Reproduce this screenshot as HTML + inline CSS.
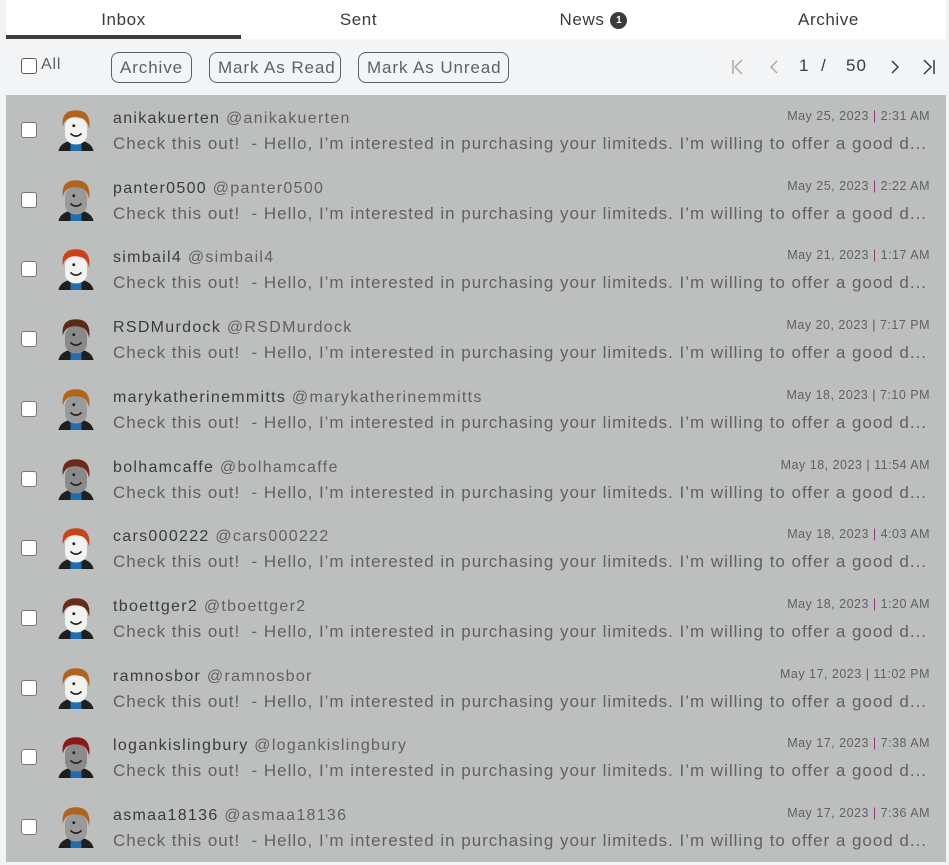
<!DOCTYPE html>
<html><head><meta charset="utf-8"><style>
*{box-sizing:border-box;margin:0;padding:0}
body{width:949px;height:865px;background:#f2f4f5;font-family:"Liberation Sans",sans-serif;position:relative;overflow:hidden}
.tabs{position:absolute;left:6px;top:0;width:940px;height:39px;background:#fff;display:flex}
.tab{flex:1;text-align:center;font-size:17px;letter-spacing:0.6px;color:#393b3d;padding-top:10px;position:relative}
.tab.act:after{content:"";position:absolute;left:0;right:0;bottom:0;height:4px;background:#393b3d}
.badge{display:inline-block;width:17px;height:17px;border-radius:50%;background:#393b3d;color:#fff;font-size:10px;font-weight:bold;line-height:17px;vertical-align:2px;margin-left:6px;letter-spacing:0}
.bar{position:absolute;left:6px;top:39px;width:940px;height:56px;background:#f2f4f5}
.cb{position:absolute;width:16px;height:16px;border:1px solid #5a5c5e;border-radius:3px;background:#fff}
.btn{position:absolute;top:13px;height:31px;border:1px solid #5e6063;border-radius:8px;font-size:17px;letter-spacing:0.9px;color:#5e6063;padding:5px 8px 0;white-space:nowrap}
.pg{position:absolute;top:17px;font-size:17px;color:#393b3d}
.list{position:absolute;left:6px;top:95px;width:940px;height:767px;background:#bdbebe}
.row{position:absolute;left:0;width:940px;height:70px}
.row .cb{left:15px;top:27px;border-color:#777;border-radius:3px}
.av{position:absolute;left:48px;top:12px}
.nm{position:absolute;left:107px;top:15px;font-size:16px;letter-spacing:1.3px;color:#393b3d;white-space:nowrap}
.nm span{color:#606162}
.pv{position:absolute;left:107px;top:39px;font-size:17px;letter-spacing:0.98px;color:#606162;white-space:nowrap}
.dt{position:absolute;right:16px;top:14px;font-size:12.5px;letter-spacing:0.5px;color:#606162;white-space:nowrap}
.dt i{font-style:normal;color:#8a3a7a}
</style></head><body>
<div class="tabs">
<div class="tab act">Inbox</div><div class="tab">Sent</div><div class="tab">News<span class="badge">1</span></div><div class="tab">Archive</div>
</div>
<div class="bar">
<div class="cb" style="left:15px;top:19px"></div>
<div style="position:absolute;left:35px;top:17px;font-size:16px;letter-spacing:0.8px;color:#5e6063">All</div>
<div class="btn" style="left:105px;width:81px">Archive</div>
<div class="btn" style="left:203px;width:132px">Mark As Read</div>
<div class="btn" style="left:352px;width:151px">Mark As Unread</div>
<svg style="position:absolute;left:724px;top:19px" width="16" height="18" viewBox="0 0 16 18" fill="none" stroke="#aaa" stroke-width="1.5"><path d="M3 2V16M12 2L5 9L12 16"/></svg>
<svg style="position:absolute;left:762px;top:19px" width="12" height="18" viewBox="0 0 12 18" fill="none" stroke="#aaa" stroke-width="1.5"><path d="M9 3L3 9L9 15"/></svg>
<div class="pg" style="left:793px">1</div>
<div class="pg" style="left:815px">/</div>
<div class="pg" style="left:840px;letter-spacing:1px">50</div>
<svg style="position:absolute;left:883px;top:19px" width="12" height="18" viewBox="0 0 12 18" fill="none" stroke="#393b3d" stroke-width="1.5"><path d="M3 3L9 9L3 15"/></svg>
<svg style="position:absolute;left:915px;top:19px" width="16" height="18" viewBox="0 0 16 18" fill="none" stroke="#393b3d" stroke-width="1.5"><path d="M3 2L10 9L3 16M13 2V16"/></svg>
</div>
<div class="list"></div>
<script>
var d=[["anikakuerten","May 25, 2023","2:31 AM","#f2f2f0","#b0641e"],["panter0500","May 25, 2023","2:22 AM","#9a9a9a","#b0641e"],["simbail4","May 21, 2023","1:17 AM","#f2f2f0","#c9421a"],["RSDMurdock","May 20, 2023","7:17 PM","#8a8a8a","#5a2a1a"],["marykatherinemmitts","May 18, 2023","7:10 PM","#9a9a9a","#b0641e"],["bolhamcaffe","May 18, 2023","11:54 AM","#8a8a8a","#6a2a1a"],["cars000222","May 18, 2023","4:03 AM","#f2f2f0","#c9421a"],["tboettger2","May 18, 2023","1:20 AM","#f2f2f0","#6a2a1a"],["ramnosbor","May 17, 2023","11:02 PM","#f2f2f0","#b0641e"],["logankislingbury","May 17, 2023","7:38 AM","#8a8a8a","#8a1a1a"],["asmaa18136","May 17, 2023","7:36 AM","#9a9a9a","#b0641e"]];
var h="";
d.forEach(function(r,i){
var t=(i*69.7).toFixed(1);
h+='<div class="row" style="top:'+t+'px"><div class="cb"></div>'+
'<svg class="av" width="44" height="44" viewBox="0 0 40 40"><path d="M4 40 Q6 31 20 30 Q34 31 36 40 Z" fill="#1f1f1f"/><rect x="15" y="33" width="10" height="7" fill="#1f6fb0"/><rect x="10" y="9" width="20" height="25" rx="9" fill="'+r[3]+'"/><path d="M15 24 Q20 29 25 24" stroke="#222" stroke-width="1.5" fill="none"/><circle cx="18" cy="17" r="1.3" fill="#222"/><path d="M8 18 Q6 3 20 3 Q34 3 32 20 Q30 11 24 10 Q16 8 11 12 Q9 14 8 18Z" fill="'+r[4]+'"/></svg>'+
'<div class="nm">'+r[0]+' <span>@'+r[0]+'</span></div>'+
'<div class="dt">'+r[1]+' <i>|</i> '+r[2]+'</div>'+
'<div class="pv">Check this out!&nbsp; - Hello, I\u2019m interested in purchasing your limiteds. I\u2019m willing to offer a good d...</div></div>';
});
document.querySelector('.list').insertAdjacentHTML('beforeend',h);
</script>
</body></html>
